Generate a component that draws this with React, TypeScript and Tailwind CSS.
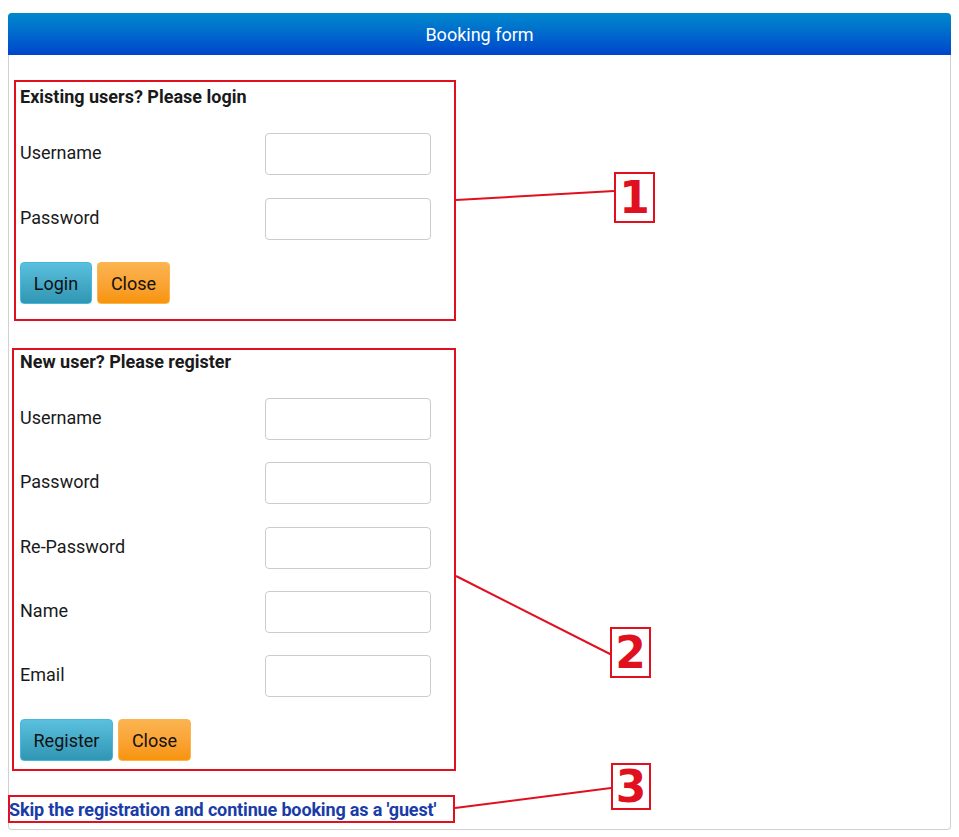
import React from "react";

const font = { fontFamily: "Roboto, 'Noto Sans', sans-serif" };

type FieldProps = { label: string; type?: string };

const Field: React.FC<FieldProps> = ({ label, type = "text" }) => (
  <div className="flex items-center">
    <label className="-mt-[2px] w-[245px] text-[18px] leading-6 text-[#1a1a1a]">{label}</label>
    <input
      type={type}
      className="h-[42px] w-[166px] rounded-[4px] border border-[#cccccc] bg-white px-2 outline-none"
    />
  </div>
);

const InfoButton: React.FC<{ label: string; width: string }> = ({ label, width }) => (
  <button
    className={`${width} h-[42px] rounded-[4px] border border-[#46b8da] bg-gradient-to-b from-[#5bc0de] to-[#2f96b4] text-[18px] text-[#111]`}
  >
    {label}
  </button>
);

const WarnButton: React.FC<{ label: string; width: string }> = ({ label, width }) => (
  <button
    className={`${width} h-[42px] rounded-[4px] border border-[#fbb450] bg-gradient-to-b from-[#fbb450] to-[#f89406] text-[18px] text-[#111]`}
  >
    {label}
  </button>
);

const Callout: React.FC<{ n: string; className: string }> = ({ n, className }) => (
  <div
    className={`absolute flex items-center justify-center border-2 border-[#e0101f] bg-white text-[44px] font-bold leading-none text-[#e0101f] ${className}`}
    style={{ fontFamily: "'DejaVu Sans', sans-serif" }}
  >
    {n}
  </div>
);

export default function App() {
  return (
    <div className="relative min-h-[837px] bg-white px-2 pt-[13px]" style={font}>
      <div className="w-[943px] rounded-[4px] border border-t-0 border-[#d0d0d0] pb-[6px]">
        <div className="-mx-px flex h-[42px] items-center justify-center rounded-t-[4px] bg-gradient-to-b from-[#0088cc] to-[#0044cc] text-[18px] text-white">
          Booking form
        </div>

        <div className="ml-[5px] mt-[25px] w-[442px] border-2 border-[#e0101f] pb-[15px] pl-[4px] pt-[3px]">
          <h2 className="text-[18px] font-bold leading-6 text-[#1a1a1a]">Existing users? Please login</h2>
          <div className="mt-[24px] flex flex-col gap-[23px]">
            <Field label="Username" />
            <Field label="Password" type="password" />
          </div>
          <div className="mt-[22px] flex gap-[5px]">
            <InfoButton label="Login" width="w-[72px]" />
            <WarnButton label="Close" width="w-[73px]" />
          </div>
        </div>

        <div className="ml-[3px] mt-[27px] w-[444px] border-2 border-[#e0101f] pb-[8px] pl-[6px]">
          <h2 className="text-[18px] font-bold leading-6 text-[#1a1a1a]">New user? Please register</h2>
          <div className="mt-[24px] flex flex-col gap-[22.25px]">
            <Field label="Username" />
            <Field label="Password" type="password" />
            <Field label="Re-Password" type="password" />
            <Field label="Name" />
            <Field label="Email" />
          </div>
          <div className="mt-[22px] flex gap-[5px]">
            <InfoButton label="Register" width="w-[93px]" />
            <WarnButton label="Close" width="w-[73px]" />
          </div>
        </div>

        <div className="-ml-px mt-[24px] flex h-[28px] w-[447px] items-center border-2 border-[#e0101f]">
          <a href="#" className="-ml-px text-[18px] font-bold tracking-[-0.15px] text-[#1a3ca8]">
            Skip the registration and continue booking as a 'guest'
          </a>
        </div>
      </div>

      <svg className="pointer-events-none absolute left-0 top-0" width="959" height="837">
        <line x1="456" y1="200" x2="614" y2="191" stroke="#e0101f" strokeWidth="2" />
        <line x1="456" y1="576" x2="612" y2="655" stroke="#e0101f" strokeWidth="2" />
        <line x1="455" y1="808" x2="611" y2="788" stroke="#e0101f" strokeWidth="2" />
      </svg>
      <Callout n="1" className="left-[614px] top-[172px] h-[51px] w-[41px]" />
      <Callout n="2" className="left-[610px] top-[627px] h-[51px] w-[41px]" />
      <Callout n="3" className="left-[611px] top-[763px] h-[47px] w-[40px]" />
    </div>
  );
}
